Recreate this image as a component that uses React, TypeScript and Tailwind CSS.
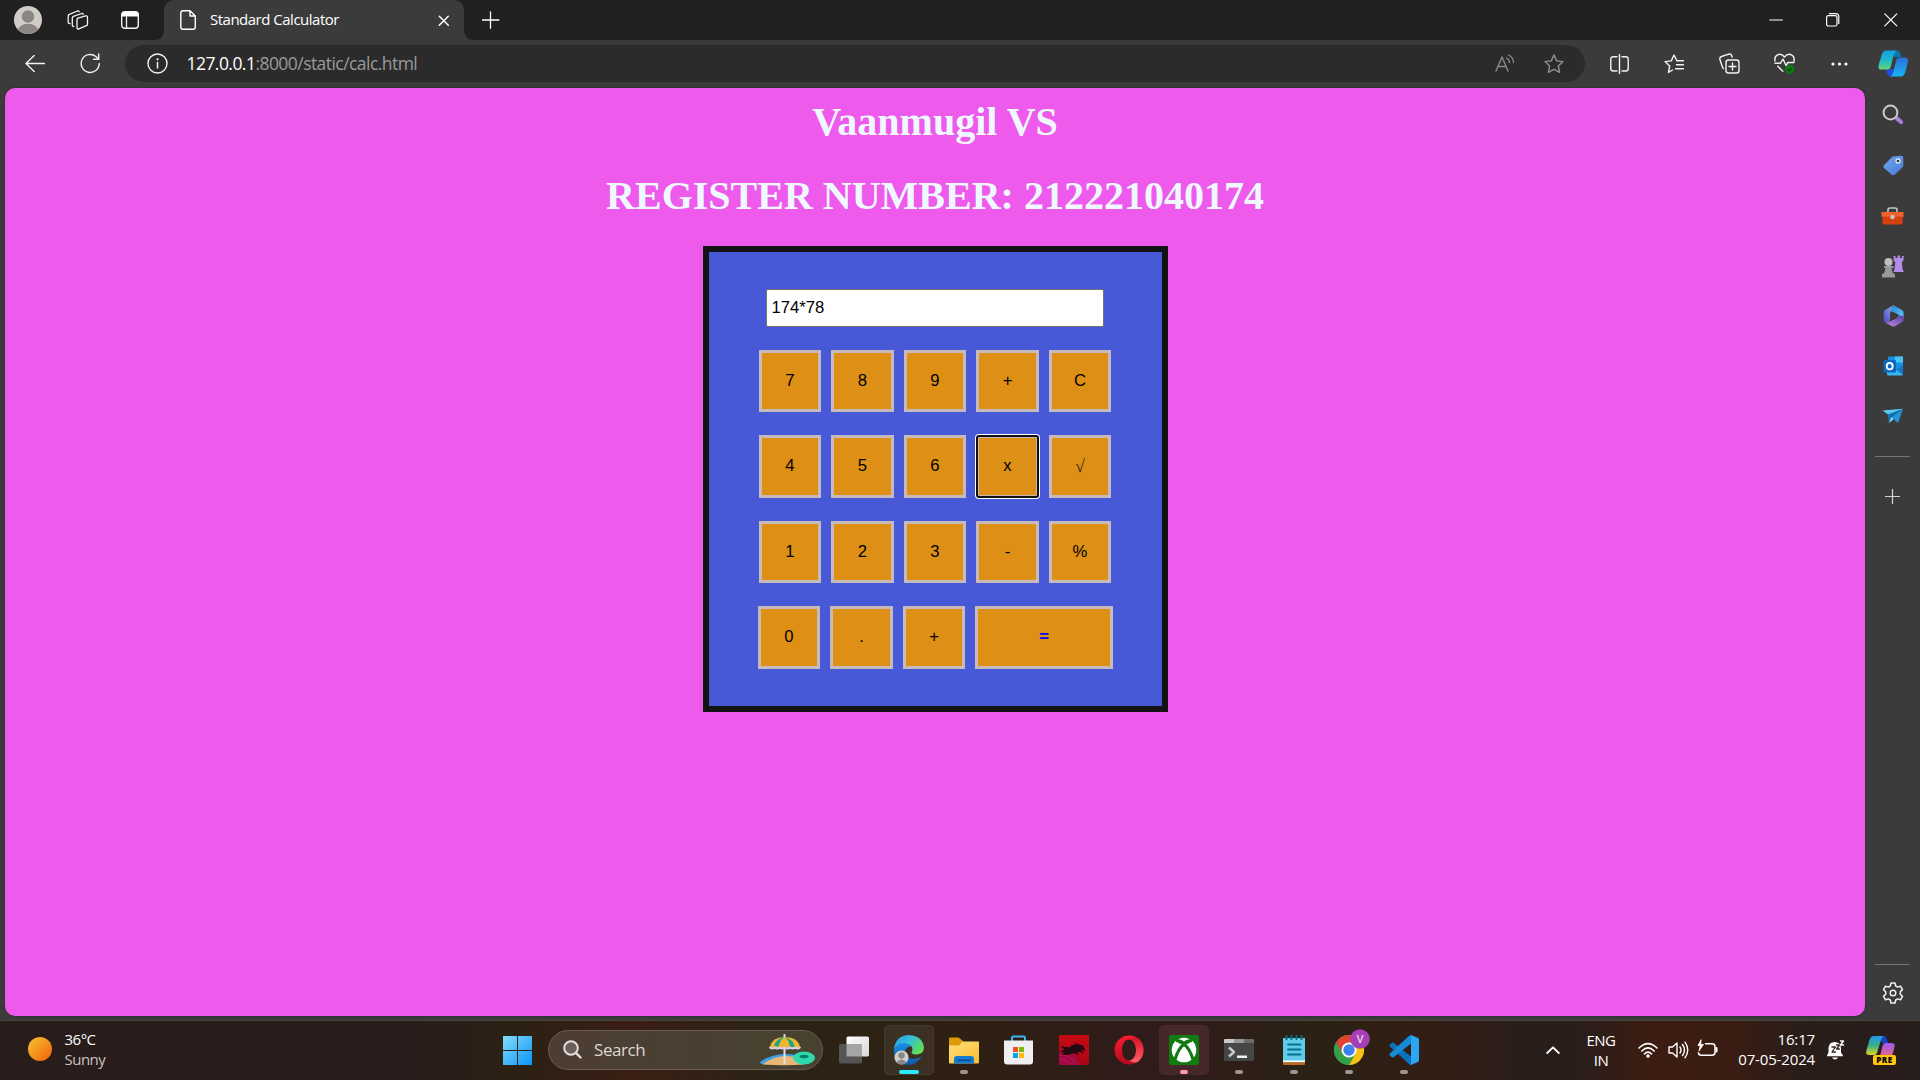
import React from "react";

type IconProps = { w: number; h: number; vb?: string; children: React.ReactNode; className?: string };

function Svg({ w, h, vb, children, className }: IconProps) {
  return (
    <svg
      width={w}
      height={h}
      viewBox={vb ?? `0 0 ${w} ${h}`}
      fill="none"
      strokeLinecap="round"
      strokeLinejoin="round"
      className={`shrink-0 ${className ?? ""}`}
    >
      {children}
    </svg>
  );
}

const INK = "#f2f2f2";

function TabStrip() {
  return (
    <div className="flex h-10 bg-[#202020]">
      <div className="flex w-[154px] items-center pl-3.5">
        <Svg w={28} h={28}>
          <clipPath id="avatar"><circle cx="14" cy="14" r="14" /></clipPath>
          <circle cx="14" cy="14" r="14" fill="#d0cdc9" />
          <g clipPath="url(#avatar)" fill="#8b8683">
            <circle cx="14" cy="10.5" r="6.2" />
            <ellipse cx="14" cy="25.5" rx="10.5" ry="7.8" />
          </g>
        </Svg>
        <Svg w={22} h={20} className="ml-[25px]">
          <g stroke={INK} strokeWidth="1.3">
            <path d="M10.2 8.3l8.300-2.400q2-.5 2 1.500v6.800q0 1.200-1.100 1.500l-7.500 3.100q-1.900.7-1.900-1.200V9.800q0-1.100.9-1.500z" />
            <path d="M6.800 16.500q-1.500 0-1.500-1.500V8q0-1.300 1.100-1.700l8.300-2.800q1.200-.3 1.500.8" />
            <path d="M3 13.500q-1.800.1-1.800-1.500V6q0-1.300 1.100-1.700L10.500 1q1.300-.3 1.700.7" />
          </g>
        </Svg>
        <Svg w={18} h={18} className="ml-8">
          <rect x=".7" y=".7" width="16.600" height="16.600" rx="3" stroke={INK} strokeWidth="1.400" />
          <path d="M.7 5.500V3Q.7.700 3 .7h12q2.300 0 2.300 2.300v2.500z" fill="#fff" />
          <path d="M5.500 6v11" stroke={INK} strokeWidth="1.300" />
        </Svg>
      </div>
      <Svg w={10} h={40}>
        <path d="M10 30v10H0q10 0 10-10z" fill="#3b3b3b" />
      </Svg>
      <div className="flex w-[300px] items-center rounded-t-[10px] bg-[#3b3b3b] pl-4">
        <Svg w={16} h={20}>
          <path d="M3 .8h7l5.300 5.300V17q0 2.200-2.200 2.200H3Q.8 19.200.8 17V3Q.8.800 3 .8zM10 .8V6h5.300" stroke="#fff" strokeWidth="1.400" />
        </Svg>
        <div className="-mt-0.5 ml-3.5 w-[228px] whitespace-nowrap font-['Open_Sans'] text-[15px] leading-5 tracking-[-0.5px] text-white">
          Standard Calculator
        </div>
        <Svg w={12} h={12} className="mt-px">
          <path d="M1.300 1.300l9 9M10.300 1.300l-9 9" stroke="#fff" strokeWidth="1.500" />
        </Svg>
      </div>
      <Svg w={10} h={40}>
        <path d="M0 30v10h10Q0 40 0 30z" fill="#3b3b3b" />
      </Svg>
      <div className="flex flex-1 items-center pl-2">
        <Svg w={18} h={18} className="-mt-px">
          <path d="M8.500 .8v16.400M.5 9h16.400" stroke="#fff" strokeWidth="1.300" />
        </Svg>
      </div>
      <div className="flex items-center pr-[22px]">
        <Svg w={14} h={14} className="-mt-px"><path d="M.8 7h12.500" stroke="#fff" strokeWidth="1.200" /></Svg>
        <Svg w={14} h={14} className="-mt-px ml-[43px]">
          <rect x=".6" y="2.600" width="10.400" height="10.400" rx="1.800" stroke="#fff" strokeWidth="1.200" />
          <path d="M3.300.600h6.500q3 0 3 3v6.800" stroke="#fff" strokeWidth="1.200" />
        </Svg>
        <Svg w={14} h={14} className="-mt-px ml-11"><path d="M.8.800l12 12M12.800.800l-12 12" stroke="#fff" strokeWidth="1.200" /></Svg>
      </div>
    </div>
  );
}

const STAR = "M10 1l2.700 5.900 6.300.700-4.700 4.400 1.300 6.400L10 15.300 4.400 18.400 5.700 12 1 7.600l6.300-.7z";

function Toolbar() {
  return (
    <div className="flex h-12 items-start bg-[#3b3b3b] pt-[5px]">
      <div className="flex h-[37px] w-[125px] items-center pl-[25px]">
        <Svg w={20} h={18}>
          <path d="M1 8.500h18.500M9.200.5L1 8.500l8.200 8" stroke={INK} strokeWidth="1.400" />
        </Svg>
        <Svg w={21} h={21} className="ml-[35px]">
          <path d="M19.200 10.500a9 9 0 1 1-3.300-7L18.500 6" stroke={INK} strokeWidth="1.400" />
          <path d="M18.700 1v5.200h-5.200" stroke={INK} strokeWidth="1.400" />
        </Svg>
      </div>
      <div className="flex h-[37px] w-[1460px] items-center rounded-full bg-[#2b2b2b] pl-[22px] pr-[21px]">
        <Svg w={21} h={21}>
          <circle cx="10.500" cy="10.500" r="9.500" stroke={INK} strokeWidth="1.400" />
          <path d="M10.500 9.500v5.500" stroke={INK} strokeWidth="1.500" />
          <circle cx="10.500" cy="6.300" r="1.100" fill={INK} />
        </Svg>
        <div className="-mt-px ml-[18.500px] flex-1 whitespace-nowrap font-['Open_Sans'] text-[17.500px] leading-6 tracking-[-0.55px] text-[#9a9a9a]">
          <span className="text-white">127.0.0.1</span>:8000/static/calc.html
        </div>
        <Svg w={20} h={20}>
          <path d="M1 17L7 3l6 14M3 12.500h8" stroke="#8a8a8a" strokeWidth="1.400" />
          <path d="M11.500 4q3 1.500 3 4.500M13.500 1q5 2.500 5 7.500" stroke="#8a8a8a" strokeWidth="1.300" />
        </Svg>
        <Svg w={20} h={20} className="ml-[29px]"><path d={STAR} stroke="#8f8f8f" strokeWidth="1.400" /></Svg>
      </div>
      <div className="flex h-[37px] flex-1 items-center pl-[25px]">
        <Svg w={19} h={20}>
          <path d="M7 2.700H3.300Q.8 2.700.8 5v9.500q0 2.500 2.500 2.500H7M12 2.700h3.700q2.500 0 2.500 2.300v9.500q0 2.500-2.500 2.500H12M9.500.500v19" stroke={INK} strokeWidth="1.400" />
        </Svg>
        <Svg w={20} h={20} className="ml-[35px]">
          <path d="M13 6.900L10 1 7.300 6.900 1 7.600 5.700 12 4.400 18.400 8.500 16M13 6.800h6.500M12.500 10.800h7M11.500 14.800h8" stroke={INK} strokeWidth="1.400" />
        </Svg>
        <Svg w={21} h={21} className="ml-[35px]">
          <rect x="7" y="7" width="13" height="13" rx="2.500" stroke={INK} strokeWidth="1.400" />
          <path d="M13.500 10v7M10 13.500h7M4.500 15.500l-.8-.8L.9 6.500Q.4 4.300 2.500 3.500L9.800 1.200Q12 .6 12.700 2.600l.5 1.600" stroke={INK} strokeWidth="1.400" />
        </Svg>
        <Svg w={21} h={21} className="ml-[34px]">
          <path d="M1 8Q.2 3.600 3.500 1.800 7.300.200 10.500 4q3.200-3.800 7-2.200Q20.800 3.600 20 8M1 10.200h5.500L9 6l3 6.500 2-3h6M3.800 13.300l5 5" stroke={INK} strokeWidth="1.400" />
          <circle cx="15.700" cy="16.300" r="4.600" fill="#107c10" />
          <path d="M13.700 16.400l1.400 1.400 2.600-2.800" stroke="#063c06" strokeWidth="1.100" />
        </Svg>
        <Svg w={18} h={6} className="ml-[35px]">
          <g fill="#fff"><circle cx="3" cy="3" r="1.600" /><circle cx="9.500" cy="3" r="1.600" /><circle cx="16" cy="3" r="1.600" /></g>
        </Svg>
        <CopilotLogo />
      </div>
    </div>
  );
}

function CopilotLogo() {
  return (
    <Svg w={31} h={27} className="ml-[30px]">
      <defs>
        <linearGradient id="cl1" x1="0" y1="0" x2="0" y2="1">
          <stop offset="0" stopColor="#12a3e0" /><stop offset=".5" stopColor="#1eb7c8" /><stop offset="1" stopColor="#62d77c" />
        </linearGradient>
        <linearGradient id="cl2" x1="0" y1="0" x2="0" y2="1">
          <stop offset="0" stopColor="#2b6fd8" /><stop offset="1" stopColor="#18b6f6" />
        </linearGradient>
      </defs>
      <path d="M14 0.500h5.500q2.200.3 3 3l.9 3.500h-7z" fill="#0a78ac" />
      <path d="M8 19h9l-1.500 7.500H12Q9.500 26 8.700 23z" fill="#1d4fd8" />
      <path d="M8.500.5H19q-2.300.500-3.200 4l-3 12Q12 19.500 9 19.500H3.500Q-.5 19.500.8 14.500L3.800 4.500Q5 .5 8.500.5z" fill="url(#cl1)" />
      <path d="M21 7.500h5.500q4.500 0 3.300 5l-2.500 9.500Q26 26.500 22.500 26.500H12q2.300-.5 3.200-4l3-12Q18.700 7.500 21 7.500z" fill="url(#cl2)" />
    </Svg>
  );
}

function Sidebar() {
  return (
    <div className="flex w-[55px] flex-col items-center">
      <div className="flex w-full flex-col items-center pt-0.5">
        <div className="flex h-[50px] items-center">
          <Svg w={22} h={22} className="ml-px">
            <path d="M15 14.500l4 3.500" stroke="#a97fe0" strokeWidth="4.200" />
            <circle cx="8.500" cy="8.500" r="6.900" stroke="#c9c9c9" strokeWidth="2" />
          </Svg>
        </div>
        <div className="flex h-[51px] items-center">
          <Svg w={21} h={21} className="ml-px">
            <linearGradient id="tag" x1="0" y1="0" x2="1" y2="1"><stop stopColor="#6ea8f2" /><stop offset="1" stopColor="#4a78d2" /></linearGradient>
            <path d="M9.500 1.500L18 .7q2.300 0 2.300 2.300v7.500q0 1-.7 1.700L12 19.500q-1.800 1.500-3.500 0L1 13q-1.200-1.300 0-2.800z" fill="url(#tag)" />
            <circle cx="15" cy="6" r="2" fill="#333" stroke="#dfe9f7" strokeWidth="1.300" />
          </Svg>
        </div>
        <div className="flex h-[50px] items-center">
          <Svg w={23} h={18}>
            <path d="M7 5V3Q7 1 9 1h5q2 0 2 2v2" stroke="#c9c9c9" strokeWidth="1.600" />
            <path d="M.5 5h22v5H.5z" fill="#f0622a" /><path d="M1.500 9.500h20V16q0 1.500-1.500 1.500H3q-1.500 0-1.500-1.500z" fill="#d64010" />
            <circle cx="11.500" cy="10" r="2.300" fill="#c4c4c4" />
          </Svg>
        </div>
        <div className="flex h-[50px] items-center">
          <Svg w={23} h={23}>
            <path d="M12.500 1h2v2h2V.5h2.500V3h2V1h1.800l-.5 5-1.500 1 .7 7 1.500 3H12.500l1-3 .8-7-1.500-1z" fill="#b18be8" />
            <circle cx="7.500" cy="7" r="4" fill="#bdbdbd" />
            <path d="M3 11h9.500v2H10.500l1 4.500 2.500 2V22.500H1v-3l2.500-2 1-4.500H3z" fill="#999" />
          </Svg>
        </div>
        <div className="flex h-[50px] items-center">
          <Svg w={21} h={22} className="ml-px">
            <defs>
              <linearGradient id="m1" x1="1" y1="0" x2="0" y2="1"><stop stopColor="#8fb4f0" /><stop offset="1" stopColor="#4b45b8" /></linearGradient>
              <linearGradient id="m2" x1="0" y1="0" x2="1" y2="1"><stop stopColor="#2a86d8" /><stop offset="1" stopColor="#62cdf5" /></linearGradient>
              <linearGradient id="m3" x1="1" y1="0" x2="0" y2="1"><stop stopColor="#5a3fa0" /><stop offset="1" stopColor="#c48be0" /></linearGradient>
            </defs>
            <path d="M12 .8q-1.500-.6-3 .2L2 5Q.6 6 .6 7.500v7.800q0 1 1 1.700l3 1.800Q7 17 7 14V8.500Q7 6.500 9 5.500z" fill="url(#m1)" />
            <path d="M8.500 1.200q2-1 3.700 0L19 5q1.500 1 1.500 2.700V14l-6-5Q12 7 9 7.500 8 5 8.500 1.200z" fill="url(#m2)" />
            <path d="M20.500 11v4q0 1.300-1.300 2.100L12 21.200q-1.500.7-3 0L2.500 17.500Q5.500 18 8 16l6-3.500q1-.6 1-2z" fill="url(#m3)" />
            <path d="M7 8.500L10 7l4 2.500v3.500l-3.500 2L7 13z" fill="#3b3b3b" />
          </Svg>
        </div>
        <div className="flex h-[50px] items-center">
          <Svg w={21} h={20} className="ml-px">
            <rect x="5" y=".5" width="15" height="17" rx="1" fill="#1a8fe0" /><path d="M12 .5h8v6h-8z" fill="#48c4f4" />
            <path d="M4 11l9 3 7-3.500V18q0 1.500-1.500 1.500h-13Q4 19.500 4 18z" fill="#37b5ee" /><path d="M13 13.500l7-4v9.500z" fill="#1277c6" />
            <rect x=".5" y="4" width="12.500" height="12.500" rx="1.200" fill="#0a68bf" /><ellipse cx="6.700" cy="10.200" rx="3" ry="3.200" stroke="#fff" strokeWidth="1.800" />
          </Svg>
        </div>
        <div className="flex h-[50px] items-center">
          <Svg w={22} h={16}>
            <path d="M.5 2.500L21 .8 7.500 7.500z" fill="#5ccbf5" /><path d="M21 .8L9.500 9l6.500 6z" fill="#1f95dc" /><path d="M21 .8L5.500 6.500l1.300 8.500L9.500 9z" fill="#0f73b4" />
            <path d="M6.800 15l2.700-6 2.200 2.200z" fill="#8fdcf8" />
          </Svg>
        </div>
      </div>
      <div className="mt-[15px] h-px w-[35px] bg-[#767676]" />
      <Svg w={15} h={15} className="mt-8 -ml-px">
        <path d="M7.500.5v14M.5 7.500h14" stroke="#d5d5d5" strokeWidth="1.200" />
      </Svg>
      <div className="mt-auto h-px w-[35px] bg-[#767676]" />
      <Svg w={22} h={22} className="mt-[17px] mb-[17px]">
        <path
          d="M9 1h4l.7 3 1.900 1.100 2.900-.9 2 3.400L18.300 9.700v2.600l2.200 2.100-2 3.400-2.900-.9-1.900 1.100L13 21H9l-.7-3-1.900-1.100-2.900.9-2-3.400 2.200-2.100V9.700L1.500 7.600l2-3.400 2.900.9L8.300 4z"
          stroke={INK}
          strokeWidth="1.500"
        />
        <circle cx="11" cy="11" r="2.800" stroke={INK} strokeWidth="1.400" />
      </Svg>
    </div>
  );
}

type KeyRow = { keys: string[]; height: string; spacing: string };

const rows: KeyRow[] = [
  { keys: ["7", "8", "9", "+", "C"], height: "h-[62px]", spacing: "mt-[23px] ml-[50px]" },
  { keys: ["4", "5", "6", "x", "√"], height: "h-[63px]", spacing: "mt-[23px] ml-[50px]" },
  { keys: ["1", "2", "3", "-", "%"], height: "h-[62px]", spacing: "mt-[23px] ml-[50px]" },
  { keys: ["0", ".", "+", "="], height: "h-[63px]", spacing: "mt-[23px] ml-[49px]" },
];

const columnWidths = ["w-[62px]", "w-[63px]", "w-[62px]", "w-[63px]", "w-[62px]"];

function Key({ label, width }: { label: string; width: string }) {
  const equals = label === "=";
  const focused = label === "x";
  const root = label === "√";
  return (
    <button
      className={`bg-[#de9016] pl-px text-center leading-5 ${equals ? "w-[138px] font-bold text-[#0000ff]" : `${width} text-black`} ${
        focused
          ? "rounded-[3px] border-[2px] border-[#101010] pb-px shadow-[inset_0_0_0_1px_#c6baba,0_0_0_1px_#ffffff]"
          : "border-[3px] border-[#c6baba] pb-px"
      }`}
    >
      {root ? <span className="font-['Liberation_Serif'] text-[18px] text-[#3d2a0a]">{label}</span> : label}
    </button>
  );
}

function Calculator() {
  return (
    <div className="mx-auto h-[466px] w-[465px] border-[6px] border-[#131313] bg-[#4759d7] font-['Liberation_Sans'] text-[16.670px]">
      <input
        readOnly
        value="174*78"
        className="mt-[37px] ml-[57px] block h-[38px] w-[338px] rounded-[2px] border border-[#767676] bg-white pl-[5px] text-black outline-none"
      />
      {rows.map((row) => (
        <div key={row.keys[0]} className={`flex gap-2.5 ${row.height} ${row.spacing}`}>
          {row.keys.map((k, i) => (
            <Key key={k} label={k} width={columnWidths[i]} />
          ))}
        </div>
      ))}
    </div>
  );
}

function Page() {
  return (
    <main className="h-[928px] w-[1860px] rounded-[10px] bg-[#ee5aec] pt-[11px] shadow-[0_0_2px_#222]">
      <h1 className="text-center font-['Liberation_Serif'] text-[40px] font-bold leading-[46px] text-[#f0f8ff]">Vaanmugil VS</h1>
      <h1 className="mt-7 mb-[27px] text-center font-['Liberation_Serif'] text-[40px] font-bold leading-[46px] text-[#f0f8ff]">
        REGISTER NUMBER: 212221040174
      </h1>
      <Calculator />
    </main>
  );
}

function TaskItem({ children, state }: { children: React.ReactNode; state?: "active" | "alert" | "open" }) {
  return (
    <div
      className={`relative flex h-[50px] w-[50px] items-center justify-center rounded-[5px] ${
        state === "active" ? "border border-white/5 bg-white/[0.07]" : state === "alert" ? "bg-[#46272a]" : ""
      }`}
    >
      {children}
      {state && (
        <div
          className={`absolute h-1 rounded-full ${
            state === "active" ? "bottom-0 w-5 bg-[#28e8fa]" : state === "alert" ? "bottom-px w-2 bg-[#ff99a4]" : "bottom-px w-2 bg-[#9b9591]"
          }`}
        />
      )}
    </div>
  );
}

function TaskApps() {
  return (
    <div className="ml-1.5 flex gap-[5px]">
      <TaskItem>
        <Svg w={30} h={30}>
          <linearGradient id="tv" x1="0" y1="0" x2="1" y2="1"><stop stopColor="#fff" /><stop offset="1" stopColor="#d6d6d6" /></linearGradient>
          <rect x="7.500" y="1.500" width="22.500" height="20" rx="1.500" fill="url(#tv)" />
          <rect x="0" y="9" width="23" height="19.500" rx="1.500" fill="#555" />
          <path d="M7.500 9H23v12.500H7.500z" fill="#a5a5a5" />
        </Svg>
      </TaskItem>
      <TaskItem state="active">
        <Svg w={30} h={30}>
          <defs>
            <linearGradient id="e1" x1="0" y1="0" x2="1" y2=".6"><stop stopColor="#2a9be6" /><stop offset=".5" stopColor="#35c1d8" /><stop offset="1" stopColor="#60dd55" /></linearGradient>
            <linearGradient id="e2" x1="0" y1="0" x2="0" y2="1"><stop stopColor="#1894e6" /><stop offset="1" stopColor="#0f59a8" /></linearGradient>
          </defs>
          <path d="M0 16Q0 7 9 6.500q7 0 8.500 5-4.500-.5-6 3.500-1 6 4.500 8.500 6 1.500 11.500-2Q23 30 14 30 0 29 0 16z" fill="url(#e2)" />
          <path d="M0 14Q2 0 15 0q14 1 15 13-.5 6-7.500 6.500-4.500 0-5-2 1.500-2 .8-5Q16 8 10 8 3 8 0 14z" fill="url(#e1)" />
          <circle cx="7.500" cy="22.500" r="7" fill="#d2d0cc" /><circle cx="7.500" cy="20.500" r="3.200" fill="#8a8683" /><path d="M2.500 27q5-5 10 0-5 5-10 0z" fill="#8a8683" />
        </Svg>
      </TaskItem>
      <TaskItem state="open">
        <Svg w={30} h={27} className="mt-px">
          <linearGradient id="fd" x1="0" y1="0" x2="1" y2="1"><stop stopColor="#ffe07a" /><stop offset="1" stopColor="#f9bd2e" /></linearGradient>
          <path d="M0 1.500Q0 .5 1 .5h8.500L14 4v6H0z" fill="#e09c08" /><path d="M0 8.500h10L13.500 4.500H29q1 0 1 1V25.500q0 1-1 1H1q-1 0-1-1z" fill="url(#fd)" />
          <path d="M5 26.500V22q0-3 3-3h14q3 0 3 3v4.500z" fill="#1479cf" /><path d="M9 23.200h12.500" stroke="#0a4d94" strokeWidth="1.500" />
        </Svg>
      </TaskItem>
      <TaskItem>
        <Svg w={30} h={30}>
          <path d="M8 6V3Q8 1.500 9.500 1.500h10Q21 1.500 21 3v3" stroke="#38b7ee" strokeWidth="2" />
          <path d="M0 5.500h29v21q0 3-3 3H3q-3 0-3-3z" fill="#efefef" />
          <path d="M9 12h5v5H9z" fill="#f25022" /><path d="M15 12h5v5h-5z" fill="#7fba00" /><path d="M9 18h5v5H9z" fill="#00a4ef" /><path d="M15 18h5v5h-5z" fill="#ffb900" />
        </Svg>
      </TaskItem>
      <TaskItem>
        <Svg w={30} h={30}>
          <linearGradient id="dr" x1="0" y1="0" x2="0" y2="1"><stop stopColor="#c80a12" /><stop offset="1" stopColor="#a80618" /></linearGradient>
          <path d="M0 0h30v30H0z" fill="url(#dr)" />
          <path d="M0 17q12-2 17 5l4 8H0z" fill="#a00a45" />
          <path d="M1.500 11.500l9 .8 2.500-2.300 4-.5-1.500-2 4 1.800 4 1 2.200 3 .3 3-1.800-1.400-2.700-.4 3 2-.5 2.300-2-2-4 .5 2 2.500-5-1.500-4 1-3.500 1-6-1 4-2-5-.8 5-1.700z" fill="#210a10" />
          <path d="M1 20q9-1.500 15 8M0 24q7-.5 11 5" stroke="#d0164a" strokeWidth=".8" />
        </Svg>
      </TaskItem>
      <TaskItem>
        <Svg w={30} h={30}>
          <linearGradient id="op" x1="0" y1="0" x2="0" y2="1"><stop stopColor="#ff1b2d" /><stop offset="1" stopColor="#b00a1c" /></linearGradient>
          <linearGradient id="op2" x1="0" y1="0" x2="0" y2="1"><stop stopColor="#d81226" /><stop offset="1" stopColor="#ff6068" /></linearGradient>
          <path fillRule="evenodd" d="M15 .5a14.500 14.500 0 1 1 0 29 14.500 14.500 0 0 1 0-29zM15 4.500c-4 0-7 4.500-7 10.500s3 10.500 7 10.500 7-4.500 7-10.500-3-10.500-7-10.500z" fill="url(#op)" />
          <path d="M15 4.500c3-2 8-3 10.500 0q4 4.500 4 10.500t-4 10.500c-2.500 3-7.500 2-10.500 0 4 0 7-4.500 7-10.500s-3-10.500-7-10.500z" fill="url(#op2)" />
        </Svg>
      </TaskItem>
      <TaskItem state="alert">
        <Svg w={30} h={30}>
          <rect width="30" height="30" rx="1.500" fill="#107c10" /><circle cx="15" cy="15" r="12.300" fill="#fff" />
          <path d="M7 4.500q4-1.200 8 2 4-3.200 8-2L20 8.500q-2-.3-5 2-3-2.300-5-2z" fill="#107c10" />
          <path d="M15 9Q9 14 6 24.500M15 9q6 5 9 15.500" stroke="#107c10" strokeWidth="3" /><path d="M8 6q4 0 7 4 3-4 7-4" stroke="#107c10" strokeWidth="2.500" />
        </Svg>
      </TaskItem>
      <TaskItem state="open">
        <Svg w={30} h={22}>
          <rect width="30" height="22" rx="1.500" fill="#444648" /><path d="M1 0h9v4H0V1q0-1 1-1z" fill="#c8c8c8" /><path d="M10 0h10v4H10z" fill="#999" /><path d="M20 0h9q1 0 1 1v3H20z" fill="#6a6a6a" />
          <path d="M5 8.500l5 4.500-5 4.500" stroke="#c9c9c9" strokeWidth="2.600" strokeLinecap="butt" /><path d="M13 16.500h10v2.500H13z" fill="#f2f2f2" />
        </Svg>
      </TaskItem>
      <TaskItem state="open">
        <Svg w={24} h={30}>
          <path d="M1 3h22v23H1z" fill="#5fcbe6" /><path d="M1 25.500h22v2H1z" fill="#fff" /><path d="M1 27.500h22V29q0 1-1 1H2q-1 0-1-1z" fill="#c0661c" />
          <path d="M4.500 1v3M9.500 1v3M14.500 1v3M19.500 1v3" stroke="#0d6680" strokeWidth="2.200" /><path d="M6 9.500h12.500M6 14.500h12.500M6 19.500h12.500" stroke="#086f94" strokeWidth="1.800" />
        </Svg>
      </TaskItem>
      <TaskItem state="open">
        <Svg w={30} h={30} className="overflow-visible">
          <circle cx="15" cy="15" r="15" fill="#34a04c" />
          <path d="M2 7.500A15 15 0 0 1 28 7.500H15L9 19z" fill="#e24434" />
          <path d="M15 30A15 15 0 0 0 28 7.500H15l6.500 11z" fill="#fbc116" />
          <path d="M2 7.500L8.500 18.800 15 22l6.500-3.500L15 30A15 15 0 0 1 2 7.500z" fill="#34a04c" />
          <circle cx="15" cy="15" r="7.500" fill="#fff" /><circle cx="15" cy="15" r="5.700" fill="#3b82f0" />
          <circle cx="26" cy="4" r="9.800" fill="#a53fb5" />
        </Svg>
        <div className="absolute top-[5px] left-[26px] w-5 text-center font-['Roboto'] text-[11px] font-medium leading-[19px] text-[#e6cdea]">V</div>
      </TaskItem>
      <TaskItem state="open">
        <Svg w={30} h={30}>
          <path d="M22 0l7 3q1 .5 1 2v20q0 1.500-1 2l-7 3z" fill="#2aa6f2" />
          <path d="M.7 9.500L3 7.700q.8-.5 1.600 0L22 21.500V30q-1 0-2-1L.8 11.500q-.8-1-.1-2z" fill="#0a72bd" />
          <path d="M.7 20.500L3 22.300q.8.500 1.600 0L22 8.500V0q-1 0-2 1L.8 18.500q-.8 1-.1 2z" fill="#148bd6" />
        </Svg>
      </TaskItem>
    </div>
  );
}

function SearchBox() {
  return (
    <div className="ml-4 flex h-10 w-[275px] items-center rounded-full border border-[#6a5c50] bg-gradient-to-r from-[#4d3d34] to-[#47422f] pl-3.5 pr-2">
      <Svg w={20} h={20}>
        <circle cx="8" cy="8" r="6.800" stroke="#e3dfdc" strokeWidth="2" fill="#6c605a" /><path d="M13.200 13.200L17.500 17.500" stroke="#e3dfdc" strokeWidth="2.400" />
      </Svg>
      <div className="ml-[11px] flex-1 font-['Open_Sans'] text-[17px] leading-6 tracking-[-0.44px] text-[#ddd8d3]">Search</div>
      <Svg w={56} h={32} className="mr-[-2px]">
        <path d="M0 28Q15 17 37 21l-8 9H1z" fill="#3d9fe8" /><path d="M3 30Q18 19 35 23l9 7.500Q24 32 3 30.500z" fill="#e9b877" />
        <path d="M24.500 1v28" stroke="#e5e0e6" strokeWidth="2" />
        <path d="M10 13Q12 3 24.500 3 38 3 40 13q-2.500 2.500-5 0-2.500 2.500-5 0-3 2.500-6 0-2.500 2.500-5 0-3 2.500-5 0-2 2-4 0z" fill="#f2b62e" />
        <path d="M14 12Q16 4.500 24.500 3 19 7 19 12.500zM24.500 3Q29 6 30 13h5Q33 5 24.500 3z" fill="#1ba981" />
        <path d="M10 13.500q2 2 4.500 0 2.500 2 5 0 2.500 2 5 0 3 2 5.500 0 2.500 2 5 0 2.500 2 5 0" stroke="#d7d0ea" strokeWidth="1.800" />
        <ellipse cx="44" cy="24" rx="11" ry="6.500" fill="#2fd9ae" /><ellipse cx="44" cy="22.500" rx="4.500" ry="1.800" fill="#0d8068" />
      </Svg>
    </div>
  );
}

function Taskbar() {
  return (
    <footer className="-mt-px flex h-[60px] items-start border-t border-[#4a4441] bg-[linear-gradient(90deg,#281d1a_0%,#281d1a_22%,#2b2113_27%,#3a1e14_33%,#2c2415_40%,#2e2013_50%,#301b1a_60%,#2b2115_68%,#331d15_75%,#281e1b_80%,#2c1d18_83%,#3d1d11_86%,#3a1d12_90%,#291d1a_94%,#281e1b_100%)] font-['Open_Sans']">
      <div className="flex h-[58px] w-[503px] items-start pl-7 pt-2">
        <Svg w={24} h={24} className="mt-2">
          <linearGradient id="sun" x1="0" y1="0" x2="1" y2="1"><stop stopColor="#f7c62f" /><stop offset="1" stopColor="#f0600a" /></linearGradient>
          <circle cx="12" cy="12" r="12" fill="url(#sun)" />
        </Svg>
        <div className="ml-[12.500px] text-[15px] leading-5 tracking-[-0.5px]">
          <div className="text-white">36°C</div>
          <div className="text-[#c9c5c3]">Sunny</div>
        </div>
      </div>
      <div className="flex h-[58px] items-center">
        <Svg w={29} h={29} className="mt-px">
          <linearGradient id="win" gradientUnits="userSpaceOnUse" x1="0" y1="0" x2="29" y2="29"><stop stopColor="#84dcfd" /><stop offset="1" stopColor="#0a95f6" /></linearGradient>
          <path d="M0 0h14v14H0zM15 0h14v14H15zM0 15h14v14H0zM15 15h14v14H15z" fill="url(#win)" />
        </Svg>
        <SearchBox />
        <TaskApps />
      </div>
      <div className="ml-auto flex h-[58px] items-center pr-[23px] text-white">
        <Svg w={14} h={8}><path d="M1.200 7L7 1.300 12.800 7" stroke="#fff" strokeWidth="1.800" /></Svg>
        <div className="ml-6 w-[34px] text-center text-[15px] leading-5 tracking-[-0.5px]">ENG<br />IN</div>
        <Svg w={20} h={16} className="ml-5 -mt-px">
          <path d="M1 6Q10-2.800 19 6M3.800 9Q10 2.800 16.200 9M6.500 11.800q3.500-3.300 7 0" stroke="#fff" strokeWidth="1.600" /><circle cx="10" cy="14" r="1.800" fill="#fff" />
        </Svg>
        <Svg w={21} h={18} className="ml-[10px]">
          <path d="M1 6v6h3.500L9 16V2L4.500 6z" stroke="#fff" strokeWidth="1.400" /><path d="M12 6q2 3 0 6M14.500 3.500q4 5.500 0 11M17 1.200q5.500 7.800 0 15.600" stroke="#fff" strokeWidth="1.400" />
        </Svg>
        <Svg w={21} h={18} className="ml-2 -mt-1">
          <path d="M8.500 4.800H15q3 0 3 3v5.500q0 3-3 3H4.500q-3 0-3-2.500" stroke="#fff" strokeWidth="1.500" /><path d="M19.500 9v3.500" stroke="#fff" strokeWidth="2" />
          <path d="M4 1l-3 5.500h2.200L2 12l4.500-6.500H4z" fill="#fff" stroke="#fff" strokeWidth=".8" />
        </Svg>
        <div className="-mt-0.5 ml-[17px] w-[80px] whitespace-nowrap text-right text-[15px] leading-5 tracking-[-0.15px]">16:17<br />07-05-2024</div>
        <Svg w={18} h={20} className="ml-3">
          <path d="M7.500 2Q13.500 2 14 8v4.500l2 3v.8H0v-.8l1.500-3V8Q2 2 7.500 2z" fill="#fff" /><path d="M5 17.500h6q-1 2-3 2t-3-2z" fill="#fff" />
          <path d="M5 7h3.500L5 12h3.500M9.500 5h3L9.500 9h3" stroke="#33231f" strokeWidth="1.300" /><path d="M13.500 1h3l-3 4h3" stroke="#fff" strokeWidth="1.400" />
        </Svg>
        <div className="relative mt-px ml-[21px] h-[29px] w-[31px]">
          <Svg w={29} h={22}>
            <linearGradient id="cp1" x1="0" y1="0" x2="0" y2="1"><stop stopColor="#2496ea" /><stop offset=".5" stopColor="#35b08c" /><stop offset="1" stopColor="#e2d51f" /></linearGradient>
            <linearGradient id="cp2" x1="0" y1="0" x2="0" y2="1"><stop stopColor="#9a5cf0" /><stop offset="1" stopColor="#f0667c" /></linearGradient>
            <path d="M13 0h5q2 .2 3 3l1 4h-6z" fill="#1742c4" />
            <path d="M8 0h10q-2 1-3 4l-4 13q-.7 2-3 2H3Q-.8 19 .5 14L3.500 4Q4.700 0 8 0z" fill="url(#cp1)" />
            <path d="M20 7h5.500q4 0 3 4l-3 11H13.500L16.500 10q.7-3 3.500-3z" fill="url(#cp2)" />
          </Svg>
          <div className="absolute top-[19px] left-[7px] h-[10px] w-[23px] rounded-[2px] bg-[#ffc60a] text-center text-[8px] font-extrabold leading-[10px] tracking-[0.5px] text-black">PRE</div>
        </div>
      </div>
    </footer>
  );
}

export default function App() {
  return (
    <div className="flex h-[1080px] w-[1920px] flex-col overflow-hidden bg-[#3b3b3b]">
      <TabStrip />
      <Toolbar />
      <div className="flex h-[933px] shrink-0 pl-[5px]">
        <Page />
        <Sidebar />
      </div>
      <Taskbar />
    </div>
  );
}
